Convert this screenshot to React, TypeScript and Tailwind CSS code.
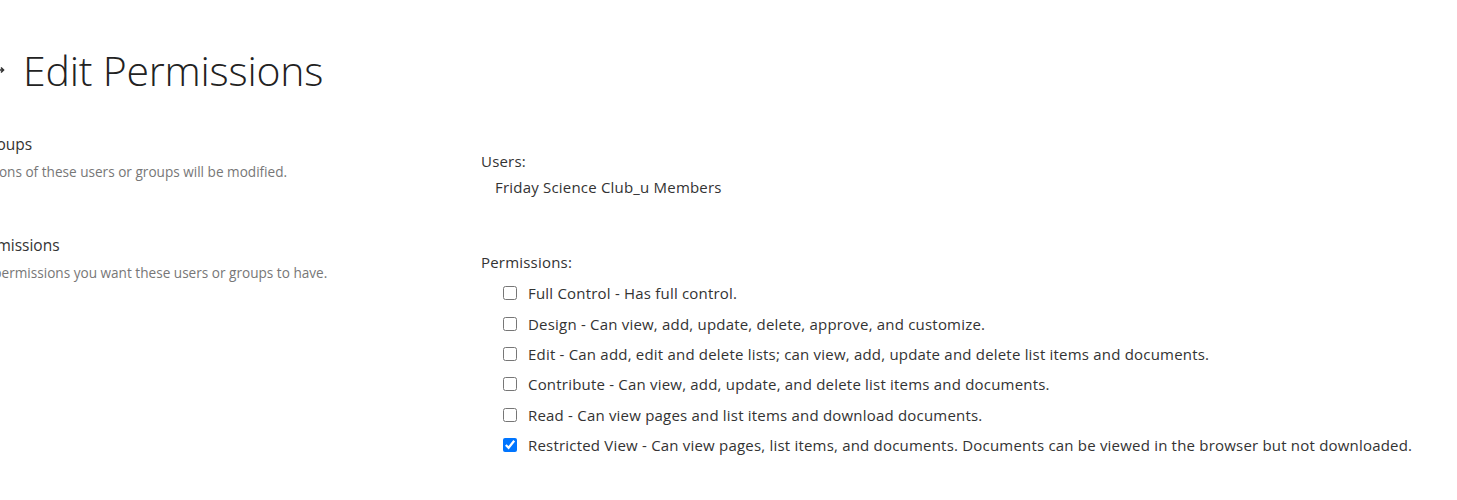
import React from 'react';

const permissions = [
  { name: 'Full Control', desc: 'Has full control.', checked: false },
  { name: 'Design', desc: 'Can view, add, update, delete, approve, and customize.', checked: false },
  { name: 'Edit', desc: 'Can add, edit and delete lists; can view, add, update and delete list items and documents.', checked: false },
  { name: 'Contribute', desc: 'Can view, add, update, and delete list items and documents.', checked: false },
  { name: 'Read', desc: 'Can view pages and list items and download documents.', checked: false },
  {
    name: 'Restricted View',
    desc: 'Can view pages, list items, and documents. Documents can be viewed in the browser but not downloaded.',
    checked: true,
  },
];

const font = { fontFamily: '"Open Sans", "Noto Sans", Arial, sans-serif' };

export default function App() {
  return (
    <div className="w-[1457px] h-[500px] overflow-hidden bg-white text-[#333]" style={font}>
      <div className="ml-[-77px]">
        {/* title */}
        <div className="flex items-center h-[72px] mt-[34px]">
          <span className="w-[100px] flex justify-end pr-[16px]">
            <svg width="10" height="10" viewBox="0 0 10 10" className="text-[#333]">
              <path d="M0 5h6M4 2.5L6.5 5 4 7.5" stroke="currentColor" strokeWidth="1.6" fill="none" />
            </svg>
          </span>
          <h1 className="text-[41px] font-light leading-none tracking-[-0.2px] text-[#222]">Edit Permissions</h1>
        </div>

        <div className="flex mt-[24px]">
          {/* left descriptions */}
          <div className="w-[558px] shrink-0 -ml-[5px] mr-[5px]">
            <div className="pt-[4px]">
              <h2 className="text-[15.5px] leading-[20px] -ml-[4px]">Users or Groups</h2>
              <p className="mt-[9px] text-[13.6px] leading-[18px] text-[#777]">
                The permissions of these users or groups will be modified.
              </p>
            </div>
            <div className="mt-[54px]">
              <h2 className="text-[15.5px] leading-[20px] -ml-[4px]">Choose Permissions</h2>
              <p className="mt-[9px] text-[13.6px] leading-[18px] text-[#777]">
                Choose the permissions you want these users or groups to have.
              </p>
            </div>
          </div>

          {/* right fields */}
          <div className="pt-[21px] text-[15px] tracking-[0.2px]">
            <div className="leading-[20px]">Users:</div>
            <div className="mt-[6px] pl-[14px] leading-[20px]">Friday Science Club_u Members</div>

            <div className="mt-[55px] leading-[20px]">Permissions:</div>
            <ul className="mt-[6px] pl-[22px]">
              {permissions.map((p) => (
                <li key={p.name} className="flex items-center h-[30.4px]">
                  <input
                    type="checkbox"
                    defaultChecked={p.checked}
                    className="w-[14px] h-[14px] m-0 accent-[#0075ff]"
                  />
                  <span className="ml-[11px] leading-[20px]">
                    {p.name} - {p.desc}
                  </span>
                </li>
              ))}
            </ul>
          </div>
        </div>
      </div>
    </div>
  );
}
